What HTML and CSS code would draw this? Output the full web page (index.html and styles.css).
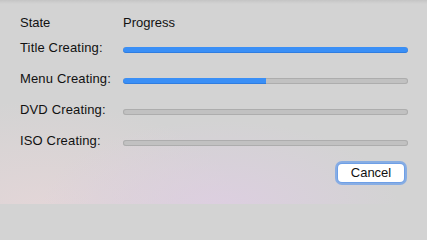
FILE: index.html
```html
<!DOCTYPE html>
<html>
<head>
<meta charset="utf-8">
<link rel="stylesheet" href="styles.css">
</head>
<body>
<div class="panel">
  <div class="grid">
    <div class="head">State</div>
    <div class="head">Progress</div>

    <div class="label">Title Creating:</div>
    <div class="bar"><div class="fill full" style="width:100%"></div></div>

    <div class="label">Menu Creating:</div>
    <div class="bar"><div class="fill" style="width:50%"></div></div>

    <div class="label">DVD Creating:</div>
    <div class="bar"></div>

    <div class="label">ISO Creating:</div>
    <div class="bar"></div>
  </div>
  <div class="actions">
    <button class="btn">Cancel</button>
  </div>
</div>
</body>
</html>
```
FILE: styles.css
```css
html, body {
  margin: 0;
  padding: 0;
  background: #d3d3d3;
}
body {
  font-family: "Liberation Sans", Arial, sans-serif;
  font-size: 13px;
  color: #111111;
}
.panel {
  box-sizing: border-box;
  width: 427px;
  height: 204px;
  overflow: hidden;
  padding: 15px 19px 0 20px;
  background:
    linear-gradient(to bottom, rgba(0,0,0,0.07) 0px, rgba(0,0,0,0.03) 2px, rgba(0,0,0,0) 4px) no-repeat,
    radial-gradient(ellipse 180px 90px at 220px 210px, rgba(222,206,226,0.9), rgba(222,206,226,0) 100%) no-repeat,
    radial-gradient(ellipse 200px 110px at 40px 210px, rgba(228,214,216,0.95), rgba(228,214,216,0) 100%) no-repeat,
    #d3d3d3;
}
.grid {
  display: grid;
  grid-template-columns: 103px 1fr;
  row-gap: 15px;
  align-items: start;
}
.head {
  line-height: 16px;
  margin-bottom: -6px;
}
.label {
  line-height: 16px;
  white-space: nowrap;
  letter-spacing: 0.15px;
}
.bar {
  margin-top: 7px;
  height: 6px;
  border-radius: 3px;
  background: #c1c1c1;
  box-shadow: inset 0 0 0 1px #adadad;
  overflow: hidden;
}
.fill {
  height: 100%;
  background: #3a8ff6;
  box-shadow: inset 0 -1px 0 #2f7de0;
  border-radius: 3px 0 0 3px;
}
.fill.full {
  border-radius: 3px;
}
.actions {
  display: flex;
  justify-content: flex-end;
  margin-top: 15px;
  padding-right: 4px;
}
.btn {
  font-family: "Liberation Sans", Arial, sans-serif;
  font-size: 13px;
  color: #111111;
  width: 66px;
  height: 18px;
  line-height: 16px;
  padding: 0;
  border: none;
  border-radius: 4px;
  background: #ffffff;
  box-shadow: 0 0 0 1px #6e9fe6, 0 0 0 3px rgba(110,160,232,0.75);
}
```
